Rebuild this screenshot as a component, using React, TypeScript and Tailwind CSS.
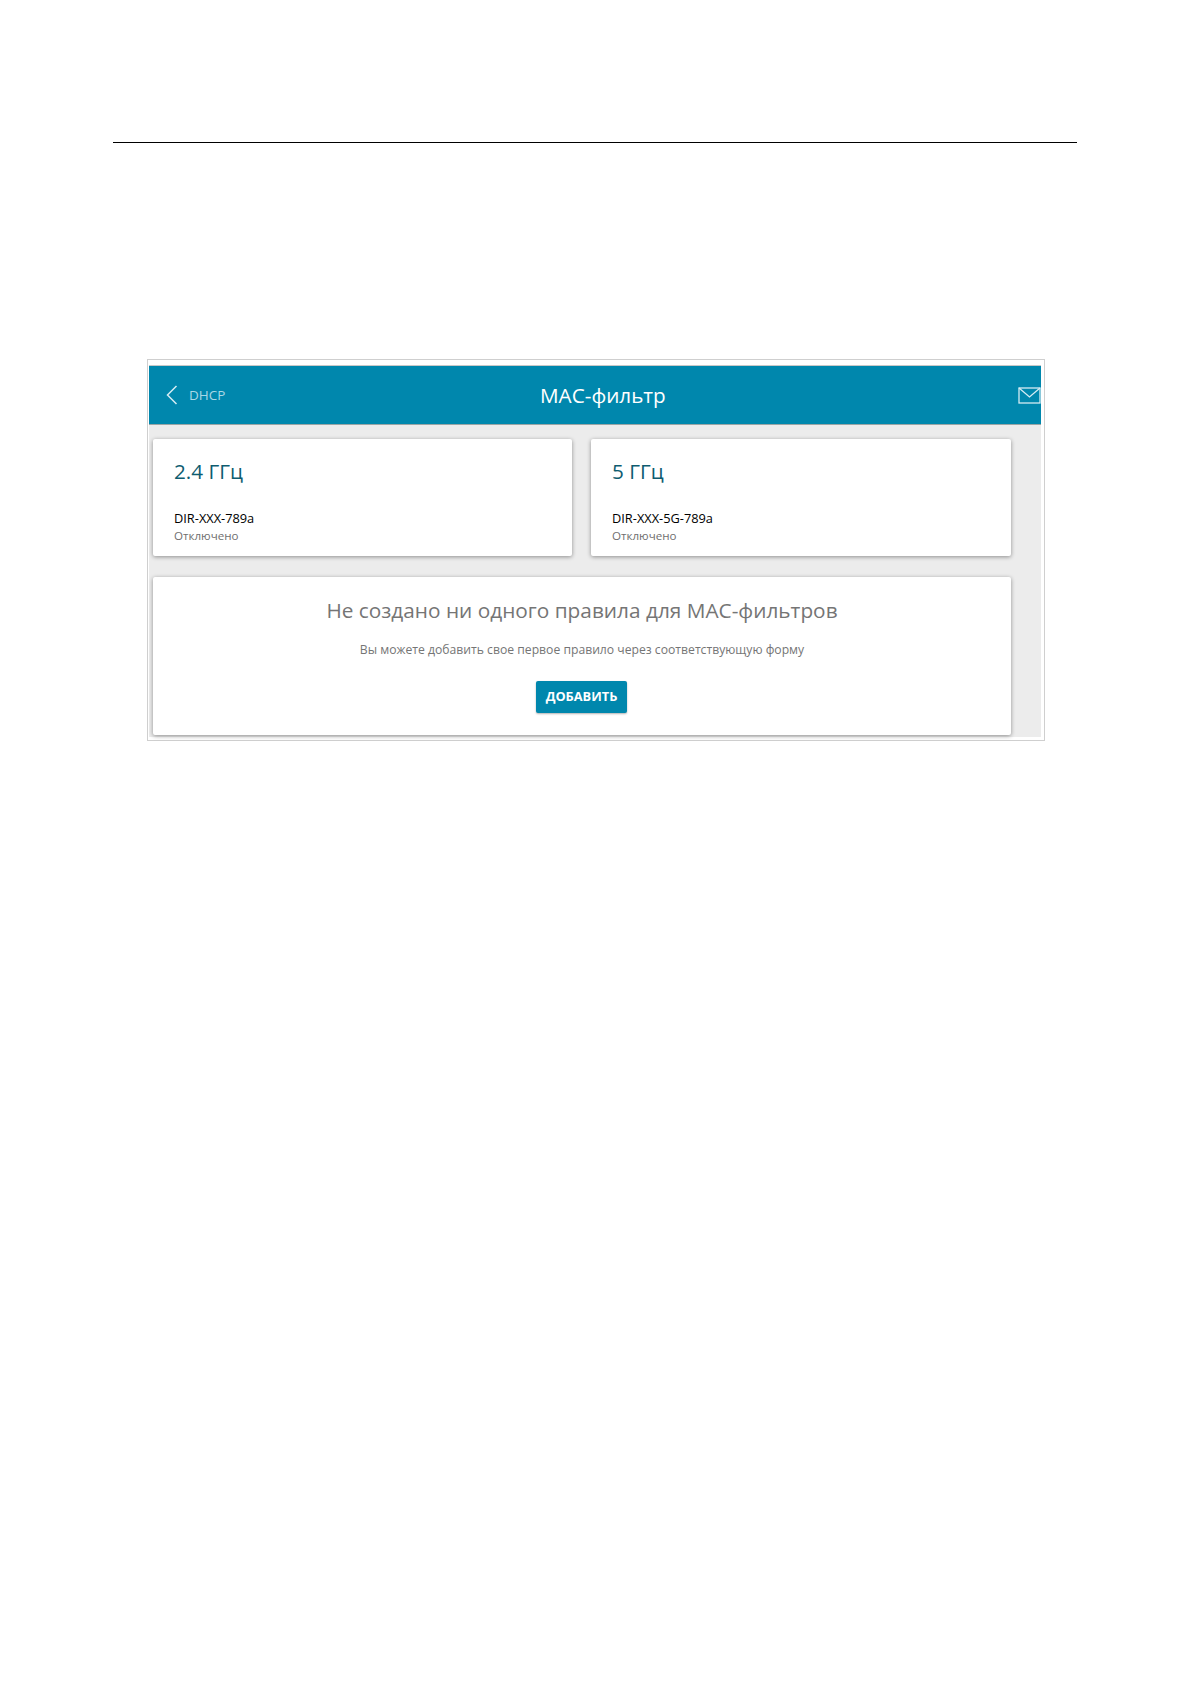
export default function App() {
  const font = { fontFamily: '"Open Sans", "Noto Sans", sans-serif' };
  const Card = ({ band, ssid, w }: { band: string; ssid: string; w: string }) => (
    <div className={`${w} h-[117px] bg-white rounded-[2px] shadow-[0_1px_4px_rgba(0,0,0,0.4)] pl-[21px] pt-[17px]`}>
      <div className="text-[20.7px] leading-[30px] text-[#0e5c70]">{band}</div>
      <div className="mt-[24px] text-[12.8px] leading-[17px] text-black">{ssid}</div>
      <div className="text-[11.6px] leading-[17px] text-[#6f6f6f]">Отключено</div>
    </div>
  );
  return (
    <div className="w-[1190px] h-[1684px] bg-white overflow-hidden pt-[142px]" style={font}>
      <div className="ml-[113px] w-[964px] h-px bg-black" />
      <div className="ml-[147px] mt-[216px] w-[898px] h-[382px] border border-[#cfcfcf] pl-[1px] pr-[3px] pt-[5px] pb-[3px]">
        <div className="h-full bg-[#ececec] flex flex-col">
          <div className="relative h-[60px] shrink-0 bg-[#0087ad] border-t border-t-[#c8c8c8] border-b border-b-[#9aa5a5] flex items-center text-white">
            <svg className="ml-[17px]" width="12" height="20" viewBox="0 0 12 20" fill="none" stroke="#d5ecf3" strokeWidth="1.5">
              <path d="M10.5 1 L1.5 10 L10.5 19" />
            </svg>
            <span className="ml-[11px] text-[13.5px] text-[#a9d8e6]">DHCP</span>
            <span className="absolute left-[391px] top-[13px] text-[20.7px] leading-[32px]">МАС-фильтр</span>
            <svg className="absolute right-0 top-[21px]" width="23" height="17" viewBox="0 0 23 17" fill="none" stroke="#d5ecf3" strokeWidth="1.3">
              <rect x="1" y="1" width="21" height="15" />
              <path d="M1 1 L11.5 10 L22 1" />
            </svg>
          </div>
          <div className="flex-1 pl-[4px] pt-[14px] w-[862px]">
            <div className="flex justify-between">
              <Card band="2.4 ГГц" ssid="DIR-XXX-789a" w="w-[419px]" />
              <Card band="5 ГГц" ssid="DIR-XXX-5G-789a" w="w-[420px]" />
            </div>
            <div className="mt-[21px] h-[158px] bg-white rounded-[2px] shadow-[0_1px_4px_rgba(0,0,0,0.4)] flex flex-col items-center pt-[18px]">
              <div className="text-[20.8px] leading-[30px] text-[#757575]">Не создано ни одного правила для МАС-фильтров</div>
              <div className="mt-[16px] text-[12.18px] leading-[17px] text-[#757575]">Вы можете добавить свое первое правило через соответствующую форму</div>
              <button className="mt-[23px] mr-[1px] w-[91px] h-[32px] bg-[#0087ad] rounded-[2px] text-white text-[12.8px] font-bold shadow-[0_1px_2px_rgba(0,0,0,0.3)]">ДОБАВИТЬ</button>
            </div>
          </div>
        </div>
      </div>
    </div>
  );
}
